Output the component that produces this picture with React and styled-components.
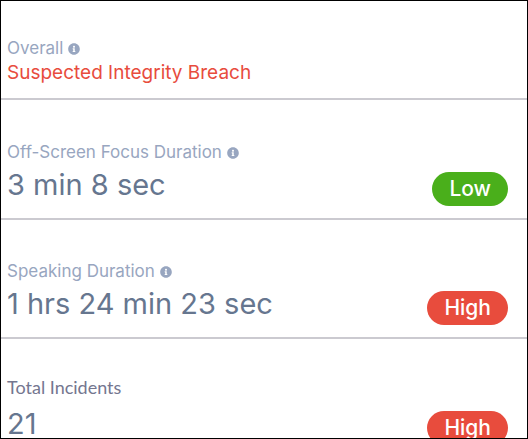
import React from 'react';
import styled, { createGlobalStyle } from 'styled-components';
import { FaInfoCircle } from 'react-icons/fa';

const GlobalStyle = createGlobalStyle`
  * {
    box-sizing: border-box;
  }

  body {
    margin: 0;
    background: #fff;
    font-family: Inter, "Liberation Sans", sans-serif;
  }
`

const Panel = styled.main`
  height: 100vh;
  border: 1px solid #000;
  overflow: hidden;
`

const Section = styled.section`
  display: flex;
  align-items: flex-end;
  justify-content: space-between;
  padding: ${props => props.$top}px 19px 12px 6px;
  border-bottom: 2px solid #cbcad0;
`

const Label = styled.h2`
  display: flex;
  align-items: center;
  gap: 5px;
  margin: 0;
  font-size: 17px;
  font-weight: 400;
  line-height: 24px;
  color: #98a6c0;
`

const PlainLabel = styled(Label)`
  margin-bottom: 4px;
  font-family: Lato, sans-serif;
  font-size: 18px;
  color: #74768f;
`

const InfoButton = styled.button`
  display: flex;
  padding: 2px 0 0;
  border: 0;
  background: none;
  color: inherit;
  font-size: 12px;
`

const Verdict = styled.p`
  margin: 0;
  font-size: 19px;
  line-height: 26px;
  color: #e84c3d;
`

const Value = styled.p`
  margin: 0;
  font-size: 29px;
  line-height: 42px;
  color: #66768f;
`

const Badge = styled.span`
  padding: 0 17px;
  border-radius: 17px;
  background: ${props => props.$level === 'Low' ? '#4aaf1b' : '#e84c3d'};
  font-size: 21px;
  font-weight: 500;
  line-height: 34px;
  color: #fff;
`

const Info = ({ about }) => (
  <InfoButton type='button' aria-label={`About ${about}`}>
    <FaInfoCircle />
  </InfoButton>
);

const metrics = [
  { label: 'Off-Screen Focus Duration', value: '3 min 8 sec', level: 'Low', top: 40, info: true },
  { label: 'Speaking Duration', value: '1 hrs 24 min 23 sec', level: 'High', top: 39, info: true },
  { label: 'Total Incidents', value: '21', level: 'High', top: 36, info: false },
];

const App = () => {
  const sections = metrics.map(({ label, value, level, top, info }) =>
    <Section $top={top} key={label}>
      <div>
        {info
          ? <Label>{label} <Info about={label} /></Label>
          : <PlainLabel>{label}</PlainLabel>}
        <Value>{value}</Value>
      </div>
      <Badge $level={level}>{level}</Badge>
    </Section>
  );

  return (
    <Panel>
      <GlobalStyle />
      <Section $top={35}>
        <div>
          <Label>Overall <Info about='Overall' /></Label>
          <Verdict>Suspected Integrity Breach</Verdict>
        </div>
      </Section>
      {sections}
    </Panel>
  );
}

export default App;
